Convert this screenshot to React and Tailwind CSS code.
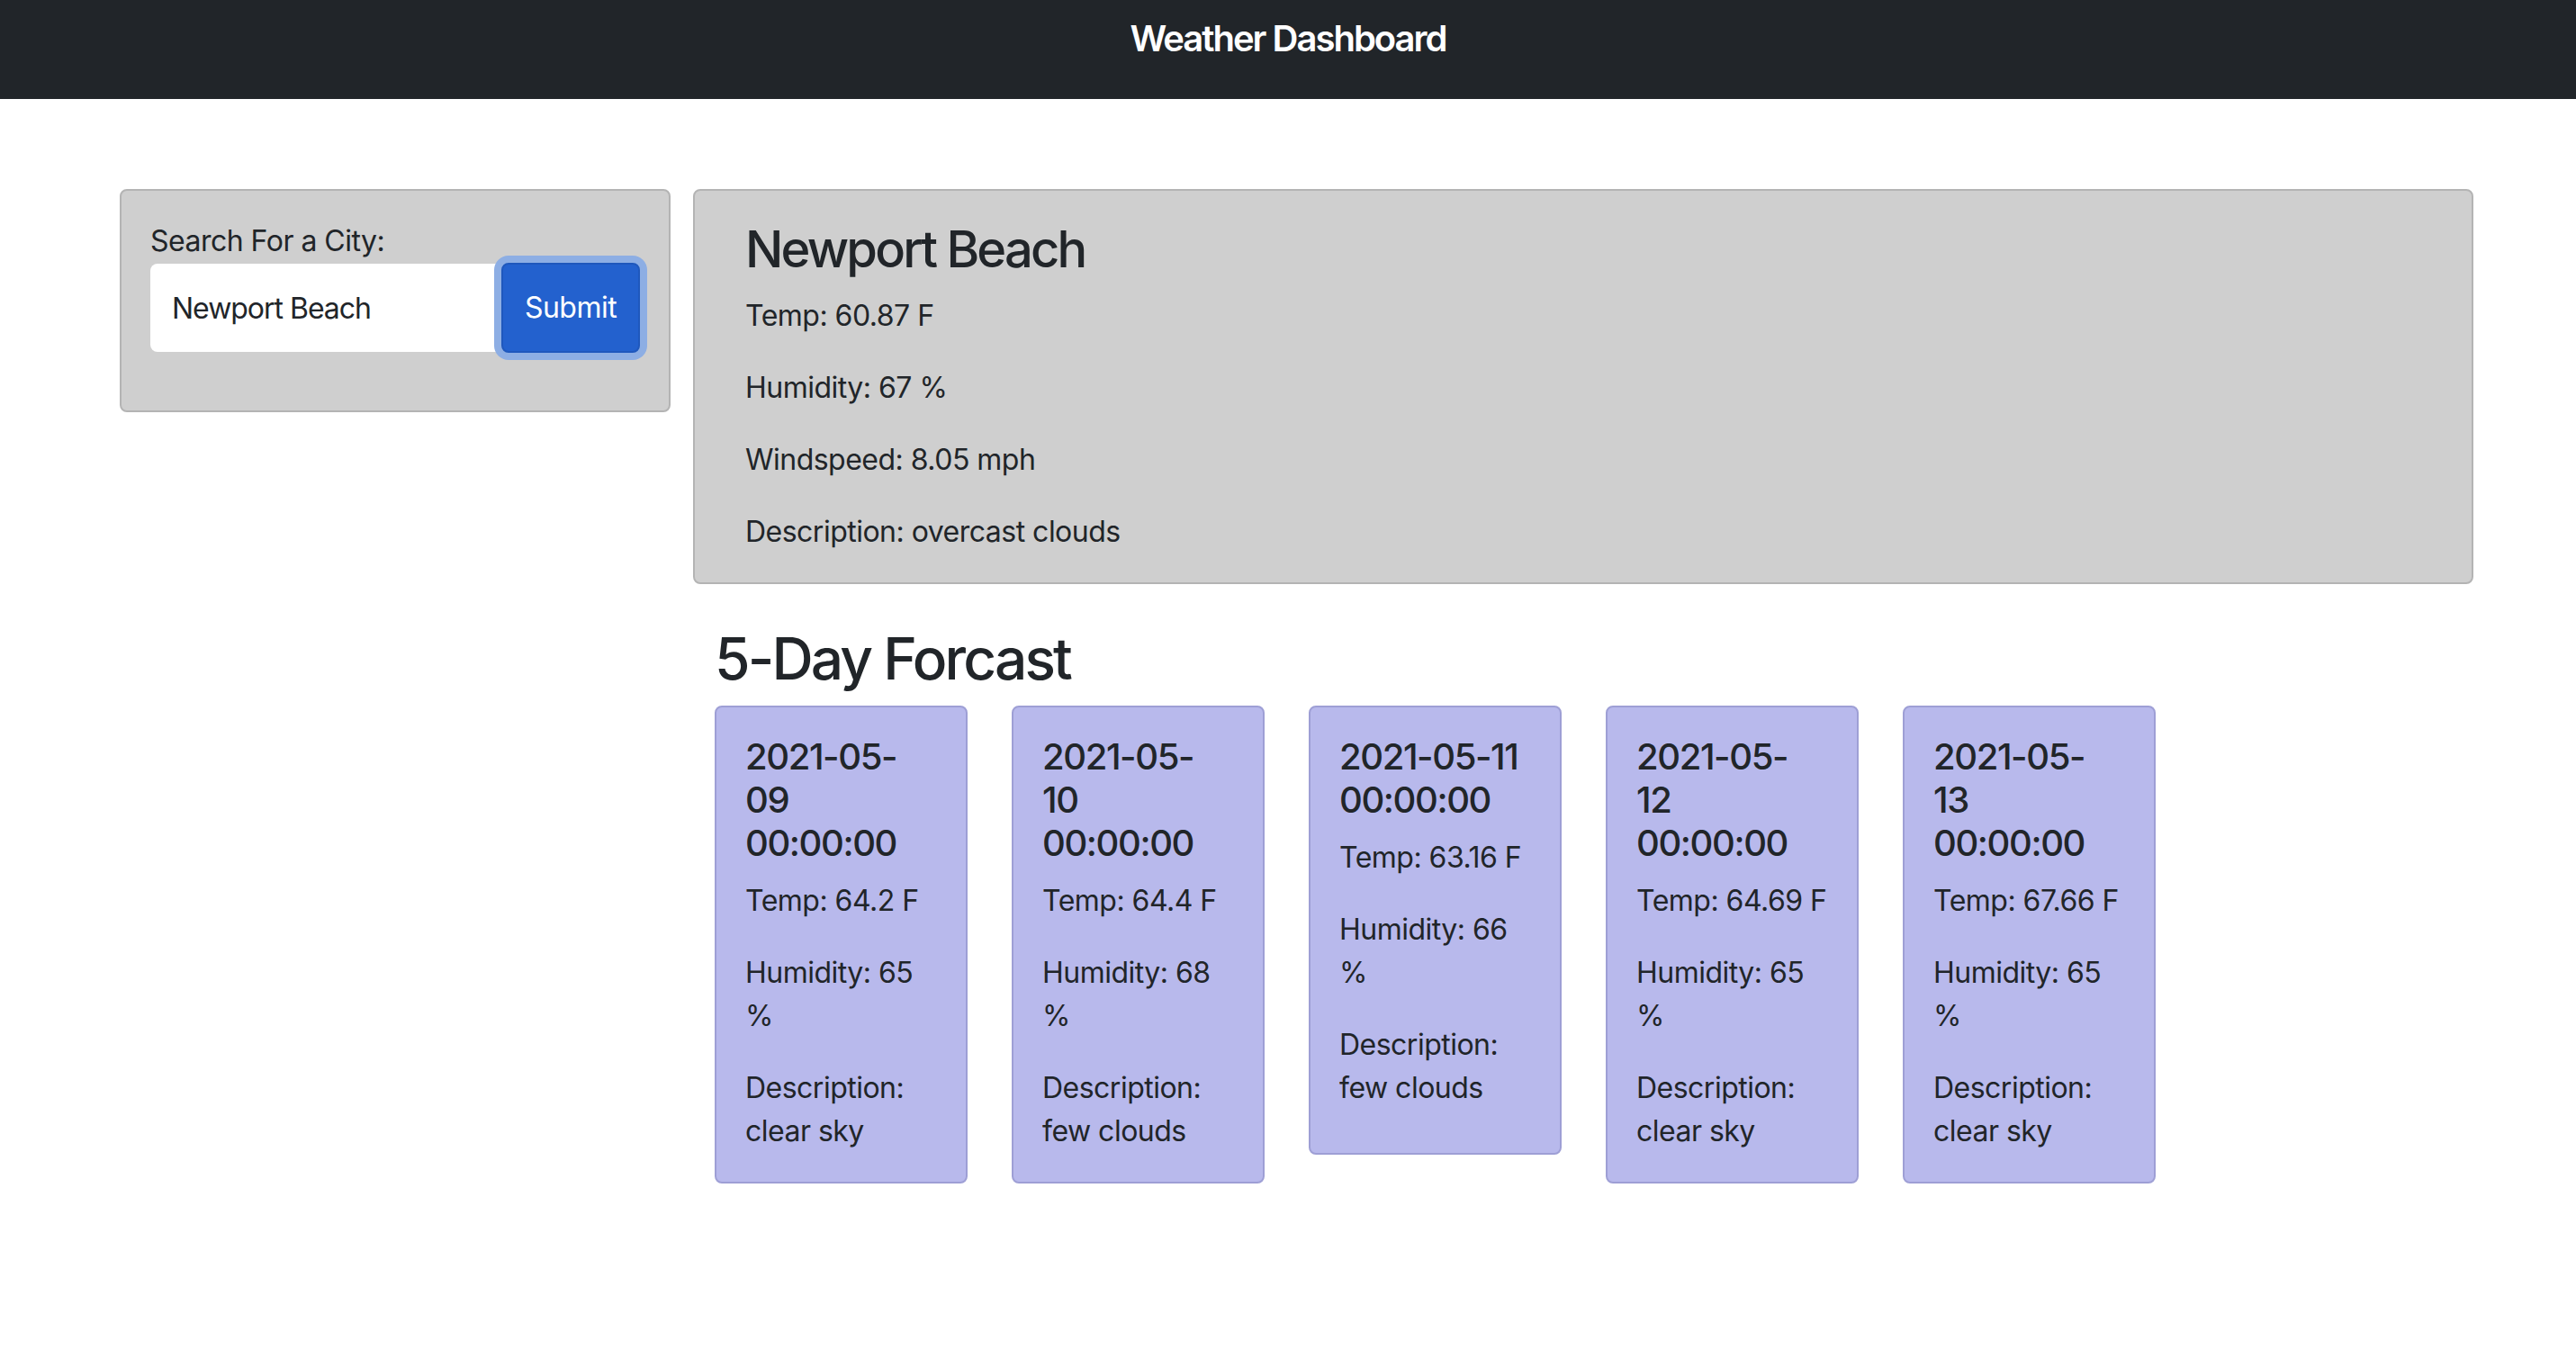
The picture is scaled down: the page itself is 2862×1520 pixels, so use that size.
import React from 'react';

const current = {
  city: "Newport Beach",
  temp: "60.87",
  humidity: "67",
  wind: "8.05",
  description: "overcast clouds",
};

// date lines are kept as they break in the card
const forecast = [
  { date: ["2021-05-", "09", "00:00:00"], temp: "64.2", humidity: "65", description: "clear sky" },
  { date: ["2021-05-", "10", "00:00:00"], temp: "64.4", humidity: "68", description: "few clouds" },
  { date: ["2021-05-11", "00:00:00"], temp: "63.16", humidity: "66", description: "few clouds", tall: true },
  { date: ["2021-05-", "12", "00:00:00"], temp: "64.69", humidity: "65", description: "clear sky" },
  { date: ["2021-05-", "13", "00:00:00"], temp: "67.66", humidity: "65", description: "clear sky" },
];

function ForecastCard({ day }) {
  return (
    <div className={`w-[281px] shrink-0 rounded-[8px] border-2 border-[#9e9fd5] bg-[#b8b9ec] px-[32px] pt-[31px] ${day.tall ? "pb-[16px]" : ""}`}>
      <h5 className="mb-[16px] text-[40px] leading-[48px] font-medium tracking-[-0.035em]">
        {day.date.map((line, i) => (
          <span key={i} className="block">{line}</span>
        ))}
      </h5>
      <p className="mb-[32px] text-[32px] leading-[48px]">Temp: {day.temp} F</p>
      <p className="mb-[32px] text-[32px] leading-[48px]">Humidity: {day.humidity} %</p>
      <p className="mb-[32px] text-[32px] leading-[48px]">Description: {day.description}</p>
    </div>
  );
}

export default function App() {
  return (
    <div className="min-h-screen bg-white text-[#212529] tracking-[-0.032em]" style={{ fontFamily: 'Inter, "Noto Sans", sans-serif' }}>
      {/* Navbar */}
      <header className="flex h-[110px] justify-center bg-[#212529] pt-[19px]">
        <span className="text-[40px] leading-[48px] font-semibold tracking-[-0.05em] text-white">Weather Dashboard</span>
      </header>

      <main className="flex items-start gap-[25px] pl-[133px] pr-[114px] pt-[100px]">
        {/* Search */}
        <aside className="w-[612px] shrink-0 rounded-[8px] border-2 border-[#b4b4b4] bg-[#cfcfcf] px-[32px] pt-[32px] pb-[64px]">
          <label className="block text-[32px] leading-[48px]">Search For a City:</label>
          <div className="flex items-center">
            <input
              type="text"
              defaultValue="Newport Beach"
              className="h-[98px] min-w-0 flex-1 rounded-l-[8px] bg-white px-[24px] text-[32px] tracking-[-0.032em] text-[#212529] outline-none"
            />
            <button className="relative z-10 h-[100px] w-[154px] shrink-0 rounded-[8px] border-2 border-[#1f58bd] bg-[#2361ce] text-[32px] text-white ring-8 ring-[#8daee4]">
              Submit
            </button>
          </div>
        </aside>

        <section className="flex-1">
          {/* Current weather */}
          <div className="rounded-[8px] border-2 border-[#b4b4b4] bg-[#cfcfcf] pl-[56px] pt-[32px]">
            <h3 className="mb-[16px] text-[56px] leading-[67px] font-medium tracking-[-0.05em]">{current.city}</h3>
            <p className="mb-[32px] text-[32px] leading-[48px]">Temp: {current.temp} F</p>
            <p className="mb-[32px] text-[32px] leading-[48px]">Humidity: {current.humidity} %</p>
            <p className="mb-[32px] text-[32px] leading-[48px]">Windspeed: {current.wind} mph</p>
            <p className="mb-[32px] text-[32px] leading-[48px]">Description: {current.description}</p>
          </div>

          {/* 5 day */}
          <div className="pl-[24px]">
            <h2 className="mt-[44px] mb-[14px] text-[64px] leading-[77px] font-medium tracking-[-0.045em]">5-Day Forcast</h2>
            <div className="flex items-start gap-[49px]">
              {forecast.map((day, i) => (
                <ForecastCard key={i} day={day} />
              ))}
            </div>
          </div>
        </section>
      </main>
    </div>
  );
}
